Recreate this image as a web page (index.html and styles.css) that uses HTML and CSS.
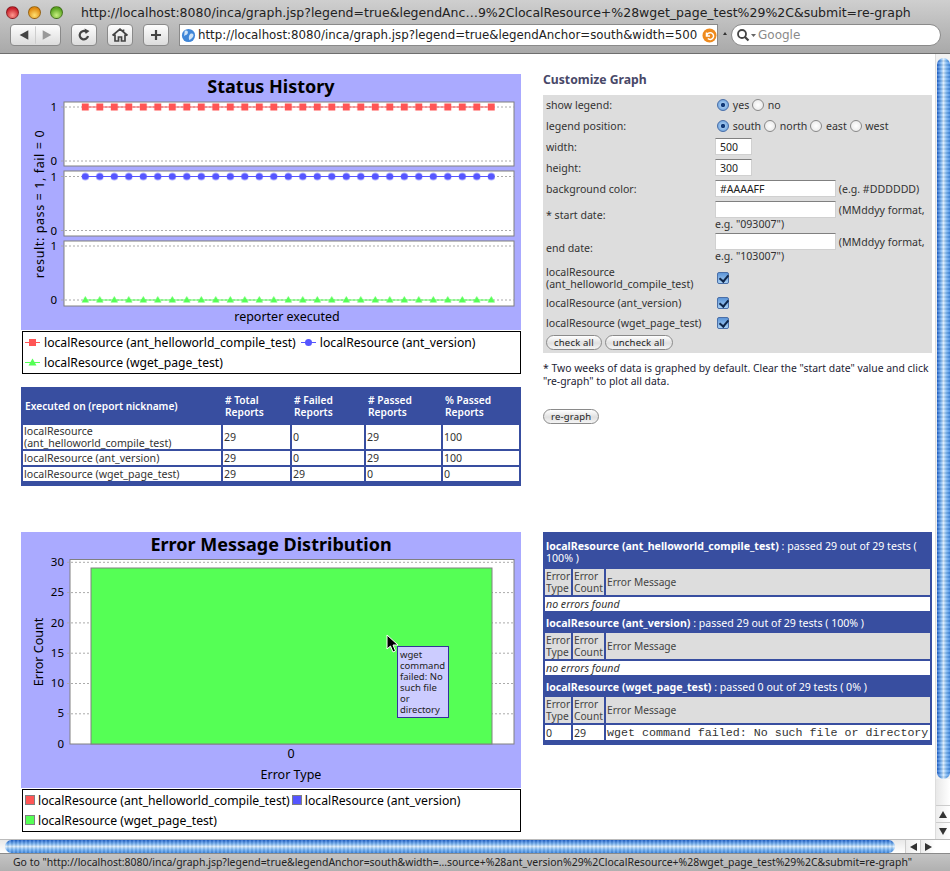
FILE: index.html
```html
<!DOCTYPE html>
<html lang="en">
<head>
    <meta charset="UTF-8">
    <title>Inca graph</title>
    <link rel="stylesheet" href="styles.css">
</head>
<body>
    <div class="window">
        <div class="titlebar">
            <span class="light light-red"></span>
            <span class="light light-yellow"></span>
            <span class="light light-green"></span>
            <span class="title-text">http://localhost:8080/inca/graph.jsp?legend=true&amp;legendAnc…9%2ClocalResource+%28wget_page_test%29%2C&amp;submit=re-graph</span>
        </div>
        <div class="toolbar">
            <div class="tool tool-nav">
                <svg width="51" height="22" viewBox="0 0 51 22"><path d="M9 11l9-5v10z" fill="#444"/><path d="M25.500 2v18" stroke="#ccc"/><path d="M42 11l-9-5v10z" fill="#999"/></svg>
            </div>
            <div class="tool">
                <svg width="16" height="16" viewBox="0 0 16 16"><path d="M12 9a4.200 4.200 0 1 1-1.600-4.200" fill="none" stroke="#444" stroke-width="2.200"/><path d="M8.500 1.500l5 2.500-3.800 3z" fill="#444"/></svg>
            </div>
            <div class="tool">
                <svg width="18" height="16" viewBox="0 0 18 16"><path d="M1.500 8.500L9 2l7.500 6.500M4 7.500V14h3.500v-4h3v4H14V7.500M12.500 2.500V5" fill="none" stroke="#444" stroke-width="1.700"/></svg>
            </div>
            <div class="tool">
                <svg width="14" height="14" viewBox="0 0 14 14"><path d="M7 2v10M2 7h10" stroke="#444" stroke-width="2.200"/></svg>
            </div>
            <div class="url-field">
                <svg class="globe" width="15" height="15" viewBox="0 0 16 16"><circle cx="8" cy="8" r="7" fill="#3f86d8"/><path d="M4 3c3-1 4 1 3 3S3 7 3 10M10 6c3-1 4 1 3 3s-3 3-4 4c-1-2-1-5 1-7z" fill="#cfe3f7"/></svg>
                <span class="url-text">http://localhost:8080/inca/graph.jsp?legend=true&amp;legendAnchor=south&amp;width=500</span>
                <svg class="url-reload" width="15" height="15" viewBox="0 0 15 15"><circle cx="7.500" cy="7.500" r="7" fill="#ee8a1e"/><path d="M4.500 4.500v3.500H8M4.800 7.500a3.400 3.400 0 1 1 1 3" fill="none" stroke="#fff" stroke-width="1.500"/></svg>
            </div>
            <span class="url-arrow"></span>
            <div class="search-field">
                <svg width="20" height="14" viewBox="0 0 20 14"><circle cx="6" cy="6" r="4" fill="none" stroke="#444" stroke-width="1.800"/><path d="M9 9l3.500 3.500" stroke="#444" stroke-width="2.200"/><path d="M15 6h5l-2.500 3z" fill="#666"/></svg>
                <span class="search-text">Google</span>
            </div>
        </div>

        <div class="viewport">
            <div class="page">
                <div class="page-grid">
                    <div class="left-top">
                        <svg class="chart" width="500" height="256" viewBox="0 0 500 256">
                            <defs>
                                <pattern id="squares" x="57.050" y="26" width="14.500" height="14" patternUnits="userSpaceOnUse">
                                    <rect x="3.750" y="3.500" width="7" height="7" fill="#ff5555"/>
                                </pattern>
                                <pattern id="circles" x="57.050" y="95.500" width="14.500" height="14" patternUnits="userSpaceOnUse">
                                    <circle cx="7.250" cy="7" r="3.600" fill="#5555ff"/>
                                </pattern>
                                <pattern id="triangles" x="57.050" y="219" width="14.500" height="14" patternUnits="userSpaceOnUse">
                                    <path d="M7.250 3l3.700 6.500h-7.400z" fill="#55ff55"/>
                                </pattern>
                            </defs>
                            <text class="chart-title" x="250" y="19">Status History</text>

                            <rect class="plot" x="43" y="28" width="450" height="64"/>
                            <path class="grid" d="M40 33H493M40 87H493"/>
                            <path d="M64 33H470" stroke="#ff5555"/>
                            <rect x="60" y="26" width="414" height="14" fill="url(#squares)"/>
                            <text class="tick" x="36" y="37">1</text>
                            <text class="tick" x="36" y="91">0</text>

                            <rect class="plot" x="43" y="97" width="450" height="65"/>
                            <path class="grid" d="M40 102.500H493M40 156.500H493"/>
                            <path d="M64 102.500H470" stroke="#5555ff"/>
                            <rect x="60" y="95.500" width="414" height="14" fill="url(#circles)"/>
                            <text class="tick" x="36" y="107">1</text>
                            <text class="tick" x="36" y="161">0</text>

                            <rect class="plot" x="43" y="167" width="450" height="65"/>
                            <path class="grid" d="M40 172H493M40 226H493"/>
                            <path d="M64 226H470" stroke="#55ff55"/>
                            <rect x="60" y="219" width="414" height="14" fill="url(#triangles)"/>
                            <text class="tick" x="36" y="176">1</text>
                            <text class="tick" x="36" y="230">0</text>

                            <text class="axis axis-wide" transform="translate(23 130) rotate(-90)">result: pass = 1, fail = 0</text>
                            <text class="axis" x="266" y="247">reporter executed</text>
                        </svg>
                        <div class="legend">
                            <span class="legend-item">
                                <svg width="15" height="11" viewBox="0 0 15 11"><path d="M0 5.500h15" stroke="#ff5555"/><rect x="4" y="2" width="7" height="7" fill="#ff5555"/></svg>
                                localResource (ant_helloworld_compile_test)
                            </span>
                            <span class="legend-item">
                                <svg width="15" height="11" viewBox="0 0 15 11"><path d="M0 5.500h15" stroke="#5555ff"/><circle cx="7.500" cy="5.500" r="3.500" fill="#5555ff"/></svg>
                                localResource (ant_version)
                            </span>
                            <span class="legend-item">
                                <svg width="15" height="11" viewBox="0 0 15 11"><path d="M0 5.500h15" stroke="#55ff55"/><path d="M7.500 1.500l4 7h-8z" fill="#55ff55"/></svg>
                                localResource (wget_page_test)
                            </span>
                        </div>

                        <table class="report-table">
                            <colgroup>
                                <col class="col-name">
                                <col class="col-total">
                                <col class="col-failed">
                                <col class="col-passed">
                                <col class="col-percent">
                            </colgroup>
                            <tr>
                                <th>Executed on (report nickname)</th>
                                <th># Total Reports</th>
                                <th># Failed Reports</th>
                                <th># Passed Reports</th>
                                <th>% Passed Reports</th>
                            </tr>
                            <tr>
                                <td>localResource (ant_helloworld_compile_test)</td>
                                <td>29</td><td>0</td><td>29</td><td>100</td>
                            </tr>
                            <tr>
                                <td>localResource (ant_version)</td>
                                <td>29</td><td>0</td><td>29</td><td>100</td>
                            </tr>
                            <tr>
                                <td>localResource (wget_page_test)</td>
                                <td>29</td><td>29</td><td>0</td><td>0</td>
                            </tr>
                        </table>
                    </div>

                    <div class="right-top">
                        <h2 class="form-heading">Customize Graph</h2>
                        <table class="form-table">
                            <colgroup><col class="col-label"><col></colgroup>
                            <tr class="row-plain">
                                <td>show legend:</td>
                                <td>
                                    <label class="opt"><input type="radio" name="legend" checked> yes</label>
                                    <label class="opt"><input type="radio" name="legend"> no</label>
                                </td>
                            </tr>
                            <tr class="row-plain">
                                <td>legend position:</td>
                                <td>
                                    <label class="opt"><input type="radio" name="anchor" checked> south</label>
                                    <label class="opt"><input type="radio" name="anchor"> north</label>
                                    <label class="opt"><input type="radio" name="anchor"> east</label>
                                    <label class="opt"><input type="radio" name="anchor"> west</label>
                                </td>
                            </tr>
                            <tr class="row-plain">
                                <td>width:</td>
                                <td><input class="field field-small" type="text" value="500"></td>
                            </tr>
                            <tr class="row-plain">
                                <td>height:</td>
                                <td><input class="field field-small" type="text" value="300"></td>
                            </tr>
                            <tr class="row-plain">
                                <td>background color:</td>
                                <td><input class="field" type="text" value="#AAAAFF"> (e.g. #DDDDDD)</td>
                            </tr>
                            <tr class="row-date">
                                <td>* start date:</td>
                                <td><input class="field" type="text"> (MMddyy format, e.g. "093007")</td>
                            </tr>
                            <tr class="row-date">
                                <td>end date:</td>
                                <td><input class="field" type="text"> (MMddyy format, e.g. "103007")</td>
                            </tr>
                            <tr class="row-long">
                                <td>localResource (ant_helloworld_compile_test)</td>
                                <td><input class="tick-box" type="checkbox" checked></td>
                            </tr>
                            <tr>
                                <td>localResource (ant_version)</td>
                                <td><input class="tick-box" type="checkbox" checked></td>
                            </tr>
                            <tr>
                                <td>localResource (wget_page_test)</td>
                                <td><input class="tick-box" type="checkbox" checked></td>
                            </tr>
                            <tr>
                                <td colspan="2">
                                    <button class="pill" type="button">check all</button>
                                    <button class="pill" type="button">uncheck all</button>
                                </td>
                            </tr>
                        </table>
                        <p class="form-note">* Two weeks of data is graphed by default. Clear the "start date" value and click "re-graph" to plot all data.</p>
                        <button class="pill pill-submit" type="button">re-graph</button>
                    </div>

                    <div class="left-bottom">
                        <div class="chart-wrap">
                            <svg class="chart" width="500" height="256" viewBox="0 0 500 256">
                                <text class="chart-title" x="250" y="19">Error Message Distribution</text>
                                <rect class="plot" x="49" y="27.500" width="444" height="184.500"/>
                                <path class="grid" d="M46 30.300H493M46 60.600H493M46 90.900H493M46 121.200H493M46 151.500H493M46 181.800H493"/>
                                <rect x="70" y="36" width="401" height="176" fill="#55ff55" stroke="#808080"/>
                                <text class="tick" x="43" y="34">30</text>
                                <text class="tick" x="43" y="64">25</text>
                                <text class="tick" x="43" y="95">20</text>
                                <text class="tick" x="43" y="125">15</text>
                                <text class="tick" x="43" y="155">10</text>
                                <text class="tick" x="43" y="185">5</text>
                                <text class="tick" x="43" y="216">0</text>
                                <text class="axis" transform="translate(22 120) rotate(-90)">Error Count</text>
                                <text class="axis" x="270" y="226">0</text>
                                <text class="axis" x="270" y="247">Error Type</text>
                            </svg>
                            <svg class="cursor" width="13" height="19" viewBox="0 0 13 19"><path d="M1 1v14l3.500-3 2.500 6 2.500-1-2.500-6h5z" fill="#000" stroke="#fff"/></svg>
                            <div class="tooltip">wget command failed: No such file or directory</div>
                        </div>
                        <div class="legend legend-boxes">
                            <span class="legend-item"><i class="swatch swatch-red"></i>localResource (ant_helloworld_compile_test)</span>
                            <span class="legend-item"><i class="swatch swatch-blue"></i>localResource (ant_version)</span>
                            <span class="legend-item"><i class="swatch swatch-green"></i>localResource (wget_page_test)</span>
                        </div>
                    </div>

                    <div class="right-bottom">
                        <table class="error-table">
                            <colgroup><col class="col-type"><col class="col-count"><col></colgroup>
                            <tr class="error-head error-head-tall">
                                <td colspan="3"><b>localResource (ant_helloworld_compile_test)</b> : passed 29 out of 29 tests ( 100% )</td>
                            </tr>
                            <tr class="error-cols"><td>Error Type</td><td>Error Count</td><td>Error Message</td></tr>
                            <tr><td class="none" colspan="3">no errors found</td></tr>
                            <tr class="error-head">
                                <td colspan="3"><b>localResource (ant_version)</b> : passed 29 out of 29 tests ( 100% )</td>
                            </tr>
                            <tr class="error-cols"><td>Error Type</td><td>Error Count</td><td>Error Message</td></tr>
                            <tr><td class="none" colspan="3">no errors found</td></tr>
                            <tr class="error-head">
                                <td colspan="3"><b>localResource (wget_page_test)</b> : passed 0 out of 29 tests ( 0% )</td>
                            </tr>
                            <tr class="error-cols"><td>Error Type</td><td>Error Count</td><td>Error Message</td></tr>
                            <tr class="error-last">
                                <td>0</td><td>29</td>
                                <td class="mono">wget command failed: No such file or directory</td>
                            </tr>
                        </table>
                    </div>
                </div>
            </div>
            <div class="vscroll">
                <div class="vthumb"></div>
                <div class="vtrack"></div>
                <div class="sbtn"><span class="arrow-up"></span></div>
                <div class="sbtn"><span class="arrow-down"></span></div>
            </div>
        </div>

        <div class="hscroll">
            <div class="hthumb"></div>
            <div class="hbtn"><span class="arrow-left"></span></div>
            <div class="hbtn"><span class="arrow-right"></span></div>
            <div class="corner"></div>
        </div>
        <div class="statusbar">Go to "http://localhost:8080/inca/graph.jsp?legend=true&amp;legendAnchor=south&amp;width=…source+%28ant_version%29%2ClocalResource+%28wget_page_test%29%2C&amp;submit=re-graph"</div>
    </div>
</body>
</html>
```

FILE: styles.css
```css
html, body {
    margin: 0;
    padding: 0;
    overflow: hidden;
}
body {
    font-family: "Noto Sans", "DejaVu Sans", sans-serif;
    font-size: 10.600px;
    color: #333;
}
.window {
    width: 950px;
    height: 871px;
    display: flex;
    flex-direction: column;
    background-color: #fff;
}

/* browser chrome */
.titlebar {
    height: 24px;
    flex: none;
    display: flex;
    align-items: center;
    padding-left: 6px;
    background: linear-gradient(#cfcfcf, #bdbdbd);
}
.light {
    width: 13px;
    height: 13px;
    border-radius: 50%;
    margin-right: 9px;
    border: 1px solid rgba(0, 0, 0, 0.35);
    box-sizing: border-box;
}
.light-red { background: radial-gradient(circle at 50% 75%, #ff9a90, #c8202a 70%); }
.light-yellow { background: radial-gradient(circle at 50% 75%, #ffe070, #e08a10 70%); }
.light-green { background: radial-gradient(circle at 50% 75%, #c8f080, #5aa420 70%); }
.title-text {
    margin-left: 9px;
    font-family: "DejaVu Sans", sans-serif;
    font-size: 12.500px;
    white-space: nowrap;
    color: #222;
}
.toolbar {
    height: 29px;
    flex: none;
    display: flex;
    align-items: flex-start;
    padding-left: 10px;
    background: linear-gradient(#bdbdbd, #a9a9a9);
    border-bottom: 1px solid #6e6e6e;
}
.tool {
    width: 26px;
    height: 22px;
    margin-right: 10px;
    display: flex;
    align-items: center;
    justify-content: center;
    border: 1px solid #8a8a8a;
    box-sizing: border-box;
    border-radius: 4px;
    background: linear-gradient(#fdfdfd, #dcdcdc);
}
.tool-nav {
    width: 51px;
}
.url-field {
    width: 539px;
    height: 22px;
    display: flex;
    align-items: center;
    box-sizing: border-box;
    padding: 0 1px;
    overflow: hidden;
    background-color: #fff;
    border: 1px solid #8a8a8a;
}
.globe {
    flex: none;
    margin-right: 2px;
}
.url-text {
    width: 504px;
    flex: none;
    white-space: nowrap;
    font-family: "DejaVu Sans", sans-serif;
    font-size: 11.800px;
    color: #222;
}
.url-reload {
    flex: none;
}
.url-arrow {
    width: 0;
    height: 0;
    margin: 8px 4px 0 5px;
    border-left: 2px solid transparent;
    border-right: 2px solid transparent;
    border-bottom: 3px solid #333;
}
.search-field {
    width: 210px;
    height: 22px;
    display: flex;
    align-items: center;
    gap: 2px;
    padding-left: 4px;
    box-sizing: border-box;
    border-radius: 11px;
    background-color: #fff;
    border: 1px solid #8a8a8a;
}
.search-text {
    font-family: "DejaVu Sans", sans-serif;
    font-size: 12px;
    color: #8a8a8a;
}

/* page area */
.viewport {
    flex: 1;
    min-height: 0;
    display: flex;
}
.page {
    flex: 1;
    padding: 20px 0 0 21px;
    overflow: hidden;
}
.page-grid {
    display: grid;
    grid-template-columns: 500px 389px;
    grid-template-rows: 458px auto;
    column-gap: 22px;
}

/* charts */
.chart {
    display: block;
    background-color: #aaaaff;
    font-family: "Noto Sans", "DejaVu Sans", sans-serif;
}
.chart-title {
    font-size: 18px;
    font-weight: bold;
    text-anchor: middle;
    fill: #000;
}
.plot {
    fill: #fff;
    stroke: #808080;
}
.grid {
    stroke: #aaa;
    stroke-dasharray: 2 2;
    fill: none;
}
.tick {
    font-size: 11.500px;
    text-anchor: end;
    fill: #000;
}
.axis {
    font-size: 12.500px;
    text-anchor: middle;
    fill: #000;
}
.axis-wide {
    letter-spacing: 0.600px;
}
.chart-wrap {
    position: relative;
}
.cursor {
    position: absolute;
    left: 365px;
    top: 102px;
}
.tooltip {
    position: absolute;
    left: 376px;
    top: 114px;
    width: 47px;
    height: 66px;
    padding: 2px 1px 2px 2px;
    border: 1px solid #333399;
    background-color: #ccccff;
    font-size: 9.500px;
    line-height: 11px;
    color: #222;
}
.legend {
    margin: 1px 0 0 1px;
    height: 43px;
    box-sizing: border-box;
    padding: 0 0 0 2px;
    display: flex;
    flex-wrap: wrap;
    align-content: flex-start;
    column-gap: 5px;
    border: 1px solid #000;
    background-color: #fff;
    font-size: 12.200px;
    color: #000;
}
.legend-item {
    height: 20px;
    display: flex;
    align-items: center;
    gap: 4px;
    white-space: nowrap;
}
.legend-boxes {
    padding-left: 2px;
    column-gap: 2px;
}
.legend-boxes .legend-item {
    gap: 3px;
}
.swatch {
    width: 8px;
    height: 8px;
    border: 1px solid #808080;
}
.swatch-red { background-color: #ff5555; }
.swatch-blue { background-color: #5555ff; }
.swatch-green { background-color: #55ff55; }

/* report table */
.report-table {
    width: 500px;
    margin-top: 13px;
    table-layout: fixed;
    border-spacing: 2px;
    background-color: #384ea0;
    padding: 0 0 3px 0;
    line-height: 12px;
}
.report-table th {
    padding: 4px 2px;
    height: 26px;
    font-size: 10.200px;
    color: #fff;
    text-align: left;
    font-weight: 600;
}
.report-table td {
    padding: 0 1px;
    background-color: #fff;
}
.report-table tr td {
    height: 14px;
}
.col-name { width: 198px; }
.col-total { width: 67px; }
.col-failed { width: 72px; }
.col-passed { width: 75px; }

/* customize form */
.form-heading {
    margin: 0;
    height: 21px;
    font-size: 12.200px;
    line-height: 12px;
    font-weight: bold;
    color: #484868;
}
.form-table {
    width: 389px;
    table-layout: fixed;
    border-collapse: collapse;
    background-color: #dddddd;
    line-height: 12px;
}
.form-table td {
    height: 20px;
    padding: 0 3px;
    vertical-align: middle;
}
.form-table td + td {
    padding: 0;
}
.form-table .row-plain td {
    height: 20.800px;
}
.form-table .row-date td {
    height: 32.500px;
}
.form-table .row-long td {
    height: 29px;
}
.col-label {
    width: 172px;
}
.opt input {
    appearance: none;
    width: 12px;
    height: 12px;
    margin: 0 1px 0 0;
    vertical-align: -2px;
    border: 1px solid #888;
    border-radius: 50%;
    background: radial-gradient(circle, #fff, #e4e4e4);
}
.opt:first-child input {
    margin-left: 2px;
}
.opt input:checked {
    border-color: #4a6fa8;
    background: radial-gradient(circle, #123a78 0, #123a78 25%, #9cc4ec 35%, #5d95d8 100%);
}
.field {
    width: 121px;
    height: 17px;
    box-sizing: border-box;
    margin: 0;
    padding: 0 4px;
    border: 1px solid #d0d0d0;
    border-top: 1px solid #808080;
    background-color: #fff;
    font-family: "Noto Sans", "DejaVu Sans", sans-serif;
    font-size: 10.500px;
    color: #222;
}
.field-small {
    width: 37px;
}
.tick-box {
    appearance: none;
    position: relative;
    display: block;
    width: 12px;
    height: 12px;
    margin: 0 0 0 2px;
    border: 1px solid #4a6fa8;
    border-radius: 2px;
    background: linear-gradient(#5d95d8, #a8d0f4);
}
.tick-box::after {
    content: "";
    position: absolute;
    left: 3px;
    top: 0;
    width: 4px;
    height: 7px;
    border: solid #10284c;
    border-width: 0 2px 2px 0;
    transform: rotate(40deg);
}
.pill {
    height: 15px;
    margin: 0;
    padding: 0 7px;
    border: 1px solid #8a8a8a;
    border-radius: 8px;
    background: linear-gradient(#fff, #e0e0e0 55%, #f4f4f4);
    font-family: "Noto Sans", "DejaVu Sans", sans-serif;
    font-size: 9.500px;
    line-height: 11px;
    letter-spacing: 0.200px;
    color: #222;
}
.form-note {
    margin: 9px 0 21px;
    line-height: 13px;
    font-size: 10.400px;
    color: #223;
}
.pill-submit {
    display: block;
}

/* error table */
.error-table {
    width: 389px;
    table-layout: fixed;
    border-spacing: 0 2px;
    padding: 0 2px 3px;
    background-color: #384ea0;
    line-height: 12px;
}
.error-table td {
    padding: 0 1px;
    height: 14px;
    background-color: #fff;
}
.error-table .error-head td {
    height: 16px;
    padding: 2px 1px 0;
    background-color: #384ea0;
    color: #fff;
}
.error-table .error-head-tall td {
    height: 31px;
}
.error-table .error-cols td {
    height: 26px;
    font-size: 10.200px;
    background-color: #dddddd;
    color: #444;
    border-left: 2px solid #384ea0;
}
.error-table td + td {
    border-left: 2px solid #384ea0;
}
.error-table .error-cols td:first-child {
    border-left: 0;
}
.error-table .error-last td {
    height: 15px;
}
.col-type { width: 26px; }
.col-count { width: 33px; }
.none {
    font-style: italic;
}
.mono {
    font-family: "Liberation Mono", monospace;
    font-size: 11.650px;
    white-space: nowrap;
}

/* scrollbars */
.vscroll {
    width: 15px;
    flex: none;
    display: flex;
    flex-direction: column;
    border-left: 1px solid #ddd;
    box-sizing: border-box;
    background-color: #f2f2f2;
}
.vthumb {
    margin: 4px 0 0 1px;
    height: 721px;
    border-radius: 7px;
    background:
        repeating-linear-gradient(#ffffff22 0 2px, #00000011 2px 4px),
        linear-gradient(90deg, #1f62cc, #78b2f0 30%, #d6eafc 50%, #7db8f4 72%, #3f88e2);
}
.vtrack {
    flex: 1;
    background: linear-gradient(90deg, #e8e8e8, #fff);
}
.sbtn, .hbtn {
    display: flex;
    align-items: center;
    justify-content: center;
    background: linear-gradient(90deg, #ededed, #fff);
    border-top: 1px solid #ccc;
}
.sbtn {
    height: 16px;
}
.arrow-up, .arrow-down {
    width: 0;
    height: 0;
    border-left: 4px solid transparent;
    border-right: 4px solid transparent;
}
.arrow-up { border-bottom: 7px solid #333; }
.arrow-down { border-top: 7px solid #333; }
.arrow-left, .arrow-right {
    width: 0;
    height: 0;
    border-top: 4px solid transparent;
    border-bottom: 4px solid transparent;
}
.arrow-left { border-right: 7px solid #333; }
.arrow-right { border-left: 7px solid #333; }
.hscroll {
    height: 14px;
    flex: none;
    display: flex;
    background: linear-gradient(#e8e8e8, #fff);
    border-top: 1px solid #bbb;
    box-sizing: border-box;
}
.hthumb {
    width: 890px;
    margin-left: 5px;
    margin-right: 10px;
    border-radius: 7px;
    background:
        repeating-linear-gradient(90deg, #ffffff22 0 2px, #00000011 2px 4px),
        linear-gradient(#1f62cc, #78b2f0 30%, #d6eafc 50%, #7db8f4 72%, #3f88e2);
}
.hbtn {
    width: 15px;
    border-top: 0;
    border-left: 1px solid #ccc;
    box-sizing: border-box;
}
.corner {
    flex: 1;
    background-color: #fff;
}
.statusbar {
    height: 18px;
    flex: none;
    padding-left: 13px;
    box-sizing: border-box;
    border-top: 1px solid #8a8a8a;
    background: linear-gradient(#c4c4c4, #b0b0b0);
    font-family: "Noto Sans", "DejaVu Sans", sans-serif;
    font-size: 10.450px;
    line-height: 17px;
    white-space: nowrap;
    color: #222;
}
```
